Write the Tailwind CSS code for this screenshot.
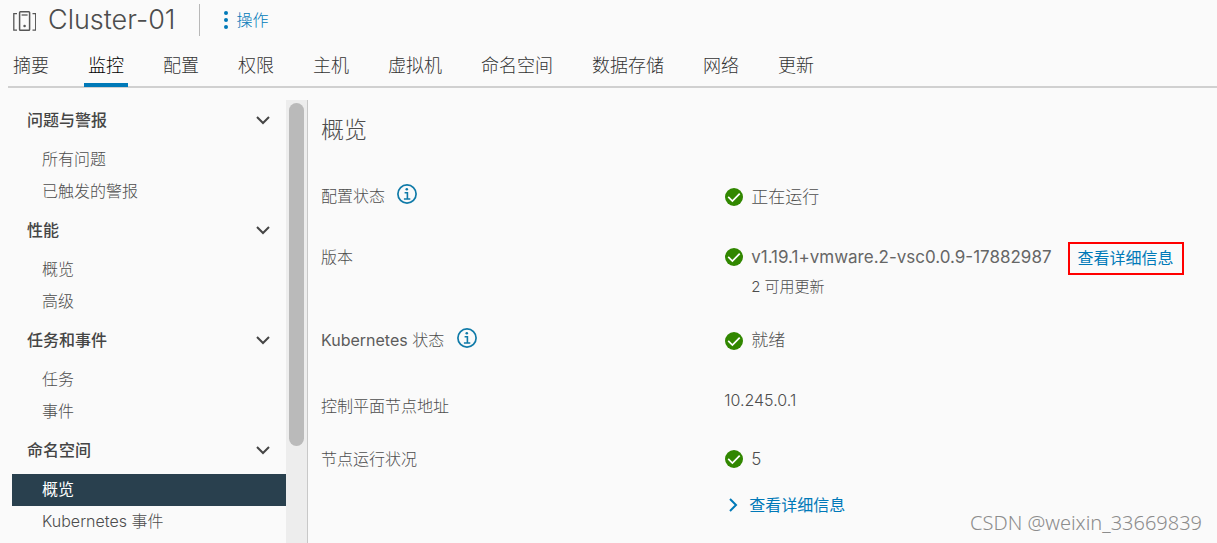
<!DOCTYPE html>
<html lang="zh-CN">
<head>
<meta charset="utf-8">
<meta name="viewport" content="width=device-width, initial-scale=1">
<title>Cluster-01</title>
<script src="https://cdn.jsdelivr.net/npm/@tailwindcss/browser@4"></script>
</head>
<body class="relative flex h-screen flex-col overflow-hidden bg-[#fafafa] font-['Inter','Noto_Sans_CJK_SC',sans-serif] font-light text-[#4d4d4d]">
<svg class="hidden">
  <symbol id="chevron" viewBox="0 0 14 9"><path d="M1 1l6 6 6-6" fill="none" stroke="currentColor" stroke-width="2"/></symbol>
  <symbol id="ok" viewBox="0 0 18 18"><circle cx="9" cy="9" r="9" fill="#318700"/><path d="M3.2 8.8l4.2 4.2 7.3-7.4" fill="none" stroke="#fff" stroke-width="1.7"/></symbol>
  <symbol id="info" viewBox="0 0 20 20"><circle cx="10" cy="10" r="9.1" fill="none" stroke="currentColor" stroke-width="1.7"/><circle cx="9.8" cy="5.3" r="1.3" fill="currentColor"/><path d="M7.6 8.7h2.8v6.2M6.9 15h6.4" fill="none" stroke="currentColor" stroke-width="1.6"/></symbol>
</svg>

<header class="flex h-10 shrink-0 items-center pl-3">
  <svg class="h-6 w-6" viewBox="0 0 24 24" fill="none" stroke="#565656" stroke-width="1.5">
    <path d="M5 5.7H1.8v16.5H5M20.5 5.7h3.2v16.5h-3.2" stroke-width="1.3"/>
    <rect x="7.6" y="3.8" width="10" height="18.4" rx="0.8"/>
    <path d="M9.6 7h6" stroke-width="1.3"/>
    <circle cx="12.6" cy="18" r="1.3" fill="#565656" stroke="none"/>
  </svg>
  <h1 class="ml-3 text-[27px] leading-10">Cluster-01</h1>
  <div class="ml-6 h-8 w-px bg-[#b8b8b8]"></div>
  <button class="ml-6 flex items-center gap-2 text-base text-[#0079b8]">
    <svg class="h-5 w-1" viewBox="0 0 4 20" fill="currentColor"><circle cx="2" cy="3" r="2"/><circle cx="2" cy="10" r="2"/><circle cx="2" cy="17" r="2"/></svg>
    操作
  </button>
</header>

<nav class="ml-2 flex h-12 shrink-0 gap-[31px] border-b-2 border-[#d0d0d0] pl-px text-lg text-[#333]">
  <a href="#" class="px-1 pt-3">摘要</a>
  <a href="#" class="-mb-px border-b-4 border-[#0079b8] px-1 pt-3 text-black">监控</a>
  <a href="#" class="px-1 pt-3">配置</a>
  <a href="#" class="px-1 pt-3">权限</a>
  <a href="#" class="px-1 pt-3">主机</a>
  <a href="#" class="px-1 pt-3">虚拟机</a>
  <a href="#" class="px-1 pt-3">命名空间</a>
  <a href="#" class="px-1 pt-3">数据存储</a>
  <a href="#" class="px-1 pt-3">网络</a>
  <a href="#" class="px-1 pt-3">更新</a>
</nav>

<div class="flex min-h-0 flex-1 pt-3">
  <aside class="flex w-[308px] shrink-0 border-r border-[#c8c8c8] pl-3">
    <div class="-mt-0.5 flex-1 text-base leading-[30px]">
      <button class="flex h-[46px] w-full items-center justify-between pr-4 pb-0.5 pl-[15px] font-medium text-[#454545]">问题与警报<svg class="h-[9px] w-3.5"><use href="#chevron"/></svg></button>
      <a href="#" class="block pb-0.5 pl-[30px]">所有问题</a>
      <a href="#" class="block pb-0.5 pl-[30px]">已触发的警报</a>
      <button class="flex h-[46px] w-full items-center justify-between pr-4 pb-0.5 pl-[15px] font-medium text-[#454545]">性能<svg class="h-[9px] w-3.5"><use href="#chevron"/></svg></button>
      <a href="#" class="block pb-0.5 pl-[30px]">概览</a>
      <a href="#" class="block pb-0.5 pl-[30px]">高级</a>
      <button class="flex h-[46px] w-full items-center justify-between pr-4 pb-0.5 pl-[15px] font-medium text-[#454545]">任务和事件<svg class="h-[9px] w-3.5"><use href="#chevron"/></svg></button>
      <a href="#" class="block pb-0.5 pl-[30px]">任务</a>
      <a href="#" class="block pb-0.5 pl-[30px]">事件</a>
      <button class="flex h-[46px] w-full items-center justify-between pr-4 pb-0.5 pl-[15px] font-medium text-[#454545]">命名空间<svg class="h-[9px] w-3.5"><use href="#chevron"/></svg></button>
      <a href="#" class="block bg-[#29404e] pb-0.5 pl-[30px] font-normal text-white">概览</a>
      <a href="#" class="block pb-0.5 pl-[30px]">Kubernetes 事件</a>
    </div>
    <div class="w-[21px] bg-[#ededed] px-[3px] pt-[3px]"><div class="h-[78%] rounded-full bg-[#bababa]"></div></div>
  </aside>

  <main class="min-w-0 flex-1 pl-[13px]">
    <h2 class="pt-3 text-[23px] leading-9">概览</h2>
    <dl class="mt-7 grid grid-cols-[45%_1fr] text-base leading-10">
      <dt class="flex h-[61px] items-start gap-3">配置状态<svg class="mt-2 h-5 w-5 text-[#0f7aa8]"><use href="#info"/></svg></dt>
      <dd class="flex items-start gap-2 pl-px text-[17px]"><svg class="mt-3 h-[18px] w-[18px]"><use href="#ok"/></svg><span class="pt-px">正在运行</span></dd>

      <dt class="h-[83px]">版本</dt>
      <dd class="pl-px">
        <div class="flex h-10 items-center gap-2 text-[17px]">
          <svg class="h-[18px] w-[18px]"><use href="#ok"/></svg><span class="font-normal text-[#666]">v1.19.1+vmware.2-vsc0.0.9-17882987</span>
          <a href="#" class="mt-0.5 ml-2 border-2 border-[#ff0000] px-2 py-0.5 text-base leading-[25px] font-normal text-[#0079b8]">查看详细信息</a>
        </div>
        <div class="pl-[26px] text-[15px] leading-5">2 可用更新</div>
      </dd>

      <dt class="flex h-[66px] items-start gap-3"><span><span class="font-normal text-[#5c5c5c]">Kubernetes</span> 状态</span><svg class="mt-2 ml-px h-5 w-5 text-[#0f7aa8]"><use href="#info"/></svg></dt>
      <dd class="flex items-start gap-2 pl-px text-[17px]"><svg class="mt-3 h-[18px] w-[18px]"><use href="#ok"/></svg>就绪</dd>

      <dt class="h-[53px]">控制平面节点地址</dt>
      <dd class="leading-7">10.245.0.1</dd>

      <dt>节点运行状况</dt>
      <dd class="pl-px">
        <div class="flex h-10 items-center gap-2 text-[17px]"><svg class="h-[18px] w-[18px]"><use href="#ok"/></svg>5</div>
        <button class="mt-1 ml-0.5 flex h-11 items-center gap-2 font-normal text-[#0079b8]">
          <svg class="h-3.5 w-3.5" viewBox="0 0 14 14" fill="none" stroke="currentColor" stroke-width="2"><path d="M3 1l6 6-6 6"/></svg>查看详细信息
        </button>
      </dd>
    </dl>
  </main>
</div>
<div class="absolute right-[15px] bottom-2 font-['Noto_Sans',sans-serif] text-xl leading-6 text-[#8c8c8c]">CSDN @weixin_33669839</div>
</body>
</html>
